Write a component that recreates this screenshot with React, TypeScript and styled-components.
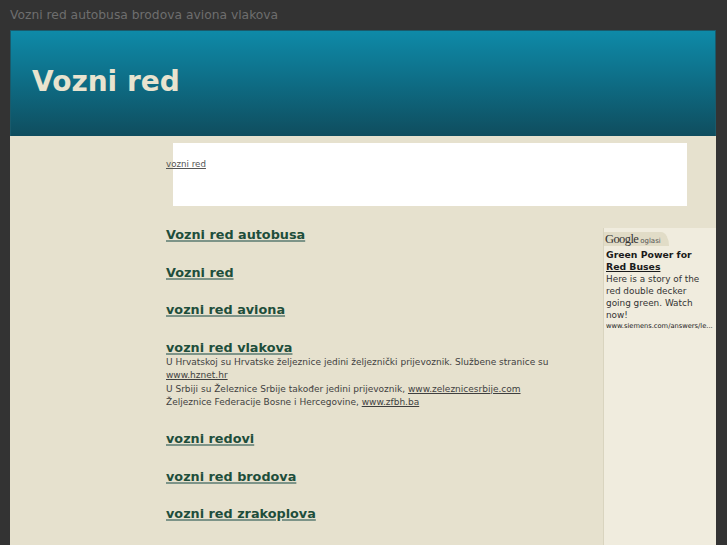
import * as React from 'react'
import styled, { createGlobalStyle } from 'styled-components'

const GlobalStyle = createGlobalStyle`
  html, body {
    margin: 0;
    padding: 0;
    background: #333333;
    font-family: "DejaVu Sans", Verdana, sans-serif;
  }
`

const Page = styled.div`
  padding: 0 11px 0 10px;
  min-height: 545px;
  box-sizing: border-box;
`

const SiteTitle = styled.div`
  height: 30px;
  line-height: 30px;
  font-size: 12.3px;
  color: #6e6e6e;
  white-space: nowrap;
`

const Container = styled.div`
  width: 706px;
  overflow: hidden;
`

const Header = styled.div`
  height: 106px;
  box-sizing: border-box;
  border: 1px solid #1a5a6b;
  border-bottom: none;
  background: linear-gradient(to bottom, #0e8aa8 0%, #0e6f88 45%, #0f4d5e 100%);
  display: flex;
  align-items: center;
  padding: 0 0 4px 21px;
`

const Logo = styled.h1`
  margin: 0;
  font-size: 28px;
  font-weight: bold;
  color: #e8e3cf;
`

const Content = styled.div`
  background: #e6e1ce;
  padding: 7px 0 0 156px;
  min-height: 409px;
  box-sizing: border-box;
`

const TopAd = styled.div`
  margin-left: 7px;
  width: 514px;
  height: 63px;
  background: #ffffff;
  box-sizing: border-box;
  padding-top: 9px;
`

const TopLink = styled.a`
  display: inline-block;
  margin-left: -7px;
  font-size: 8.7px;
  color: #555555;
  text-decoration: underline;
`

const Columns = styled.div`
  display: flex;
  margin-top: 21px;
`

const Main = styled.div`
  flex: 1 1 auto;
  min-width: 0;
  display: flex;
  flex-direction: column;
  gap: 22.5px;
`

const Section = styled.div``

const Heading = styled.a`
  display: block;
  font-size: 12.8px;
  line-height: 15px;
  font-weight: bold;
  color: #1e4e3b;
  text-decoration: underline;
  text-decoration-color: #7d9488;
  text-decoration-thickness: 2px;
  text-underline-offset: 1px;
`

const Text = styled.p`
  margin: 1px 0 -1px;
  font-size: 9px;
  line-height: 13.5px;
  color: #3f3f3f;
  max-width: 420px;
`

const TextLink = styled.a`
  color: #3f3f3f;
  text-decoration: underline;
`

const Sidebar = styled.div`
  flex: 0 0 113px;
  margin-top: 1px;
  box-sizing: border-box;
  border-left: 1px solid #d9d4bf;
  background: #f0ecde;
  min-height: 317px;
  overflow: hidden;
`

const AdLabel = styled.div`
  display: inline-flex;
  align-items: baseline;
  gap: 2px;
  height: 14px;
  padding: 0 8px 0 1px;
  background: #e1dcc7;
  border-top-right-radius: 8px 14px;
  line-height: 14px;
`

const GoogleWord = styled.span`
  font-family: "Liberation Serif", serif;
  font-size: 12.5px;
  color: #333;
  letter-spacing: -0.6px;
`

const Oglasi = styled.span`
  font-size: 7px;
  color: #555;
`

const AdBody = styled.div`
  padding: 2px 8px 0 2px;
  color: #222;
`

const AdTitle = styled.div`
  font-size: 9.3px;
  line-height: 12px;
  font-weight: bold;
  color: #1a1a1a;
`

const AdTitleLink = styled.a`
  color: #1a1a1a;
  text-decoration: underline;
`

const AdText = styled.div`
  font-size: 8.9px;
  line-height: 12px;
  color: #333;
`

const AdUrl = styled.div`
  font-size: 6.7px;
  line-height: 11px;
  color: #222;
  white-space: nowrap;
  overflow: hidden;
  margin-right: -8px;
`

const sections = ['Vozni red autobusa', 'Vozni red', 'vozni red aviona']

const sectionsAfter = ['vozni redovi', 'vozni red brodova', 'vozni red zrakoplova']

export default function App() {
  return (
    <>
      <GlobalStyle />
      <Page>
        <SiteTitle>Vozni red autobusa brodova aviona vlakova</SiteTitle>
        <Container>
          <Header>
            <Logo>Vozni red</Logo>
          </Header>
          <Content>
            <TopAd>
              <TopLink href="#">vozni red</TopLink>
            </TopAd>
            <Columns>
              <Main>
                {sections.map(s => (
                  <Section key={s}>
                    <Heading href="#">{s}</Heading>
                  </Section>
                ))}
                <Section>
                  <Heading href="#">vozni red vlakova</Heading>
                  <Text>
                    U Hrvatskoj su Hrvatske željeznice jedini željeznički prijevoznik. Službene stranice su{' '}
                    <TextLink href="#">www.hznet.hr</TextLink>
                    <br />
                    U Srbiji su Železnice Srbije također jedini prijevoznik,{' '}
                    <TextLink href="#">www.zeleznicesrbije.com</TextLink>
                    <br />
                    Željeznice Federacije Bosne i Hercegovine, <TextLink href="#">www.zfbh.ba</TextLink>
                  </Text>
                </Section>
                {sectionsAfter.map(s => (
                  <Section key={s}>
                    <Heading href="#">{s}</Heading>
                  </Section>
                ))}
              </Main>
              <Sidebar>
                <AdLabel>
                  <GoogleWord>Google</GoogleWord>
                  <Oglasi>oglasi</Oglasi>
                </AdLabel>
                <AdBody>
                  <AdTitle>
                    Green Power for
                    <br />
                    <AdTitleLink href="#">Red Buses</AdTitleLink>
                  </AdTitle>
                  <AdText>Here is a story of the red double decker going green. Watch now!</AdText>
                  <AdUrl>www.siemens.com/answers/le...</AdUrl>
                </AdBody>
              </Sidebar>
            </Columns>
          </Content>
        </Container>
      </Page>
    </>
  )
}
